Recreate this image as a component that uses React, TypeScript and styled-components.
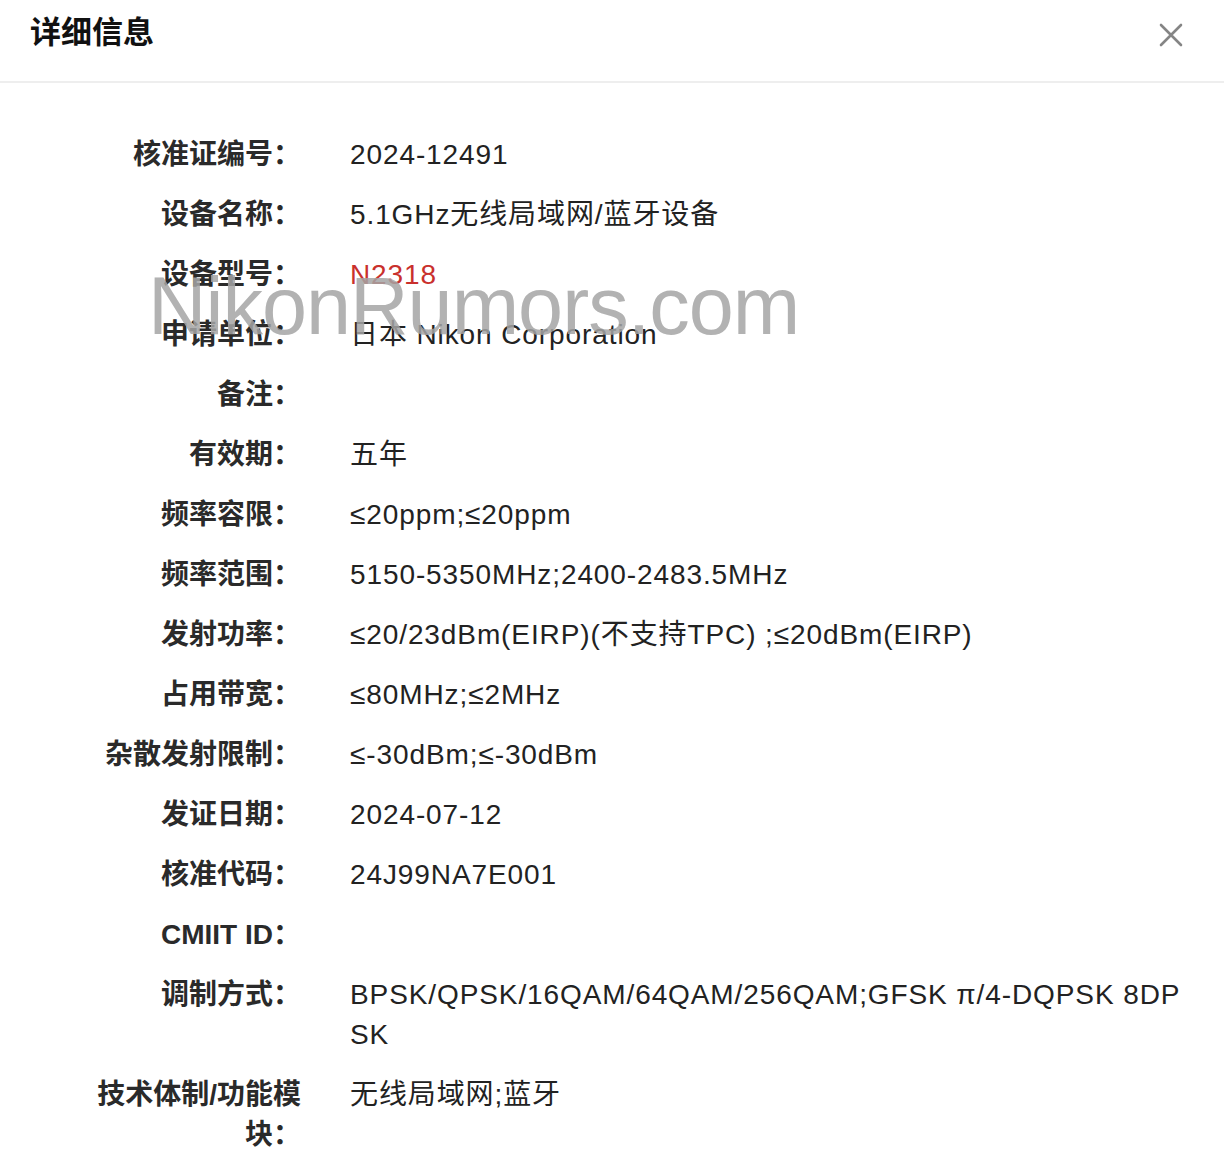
import * as React from "react";
import styled, { createGlobalStyle } from "styled-components";

const GlobalStyle = createGlobalStyle`
  html, body {
    margin: 0;
    padding: 0;
    background: #fff;
  }
  body {
    font-family: "Liberation Sans", "Noto Sans CJK SC", sans-serif;
    color: #222;
  }
`;

const Page = styled.div`
  width: 1224px;
  min-height: 1165px;
  background: #fff;
`;

const Header = styled.div`
  height: 81px;
  display: flex;
  align-items: flex-start;
  justify-content: space-between;
  padding: 0 40px 0 30px;
  border-bottom: 2px solid #eeeeee;
`;

const Title = styled.h1`
  margin: 0;
  padding-top: 12px;
  font-size: 31px;
  line-height: 42px;
  font-weight: 700;
  color: #111;
`;

const CloseButton = styled.button`
  margin-top: 22px;
  width: 26px;
  height: 26px;
  padding: 0;
  border: 0;
  background: none;
  display: flex;
  align-items: center;
  justify-content: center;
  cursor: pointer;
`;

const Body = styled.div`
  position: relative;
  display: flex;
  flex-direction: column;
  gap: 20px;
  padding: 52px 34px 12px 88px;
`;

const Row = styled.div`
  display: grid;
  grid-template-columns: 213px 1fr;
  column-gap: 49px;
  font-size: 28px;
  line-height: 40px;
`;

const Label = styled.div`
  text-align: right;
  font-weight: 700;
  color: #2a2a2a;
`;

const Value = styled.div<{ $accent?: boolean }>`
  color: ${(p) => (p.$accent ? "#c9302c" : "#222")};
  letter-spacing: 0.9px;
  word-break: break-all;
`;

const Watermark = styled.div`
  position: absolute;
  left: 148px;
  top: 183px;
  font-family: "Liberation Sans", sans-serif;
  font-size: 81px;
  line-height: 1;
  color: rgba(165, 165, 165, 0.85);
  letter-spacing: -1px;
  pointer-events: none;
  white-space: nowrap;
`;

const rows: { label: string; value: string; accent?: boolean }[] = [
  { label: "核准证编号：", value: "2024-12491" },
  { label: "设备名称：", value: "5.1GHz无线局域网/蓝牙设备" },
  { label: "设备型号：", value: "N2318", accent: true },
  { label: "申请单位：", value: "日本 Nikon Corporation" },
  { label: "备注：", value: "" },
  { label: "有效期：", value: "五年" },
  { label: "频率容限：", value: "≤20ppm;≤20ppm" },
  { label: "频率范围：", value: "5150-5350MHz;2400-2483.5MHz" },
  { label: "发射功率：", value: "≤20/23dBm(EIRP)(不支持TPC) ;≤20dBm(EIRP)" },
  { label: "占用带宽：", value: "≤80MHz;≤2MHz" },
  { label: "杂散发射限制：", value: "≤-30dBm;≤-30dBm" },
  { label: "发证日期：", value: "2024-07-12" },
  { label: "核准代码：", value: "24J99NA7E001" },
  { label: "CMIIT ID：", value: "" },
  {
    label: "调制方式：",
    value: "BPSK/QPSK/16QAM/64QAM/256QAM;GFSK π/4-DQPSK 8DPSK",
  },
  { label: "技术体制/功能模块：", value: "无线局域网;蓝牙" },
];

const CloseIcon = () => (
  <svg width="24" height="24" viewBox="0 0 24 24">
    <path
      d="M2 2 L22 22 M22 2 L2 22"
      stroke="#858585"
      strokeWidth="2.6"
      strokeLinecap="round"
    />
  </svg>
);

export default function App() {
  return (
    <Page>
      <GlobalStyle />
      <Header>
        <Title>详细信息</Title>
        <CloseButton aria-label="关闭">
          <CloseIcon />
        </CloseButton>
      </Header>
      <Body>
        {rows.map((r) => (
          <Row key={r.label}>
            <Label>{r.label}</Label>
            <Value $accent={r.accent}>{r.value}</Value>
          </Row>
        ))}
        <Watermark>NikonRumors.com</Watermark>
      </Body>
    </Page>
  );
}
